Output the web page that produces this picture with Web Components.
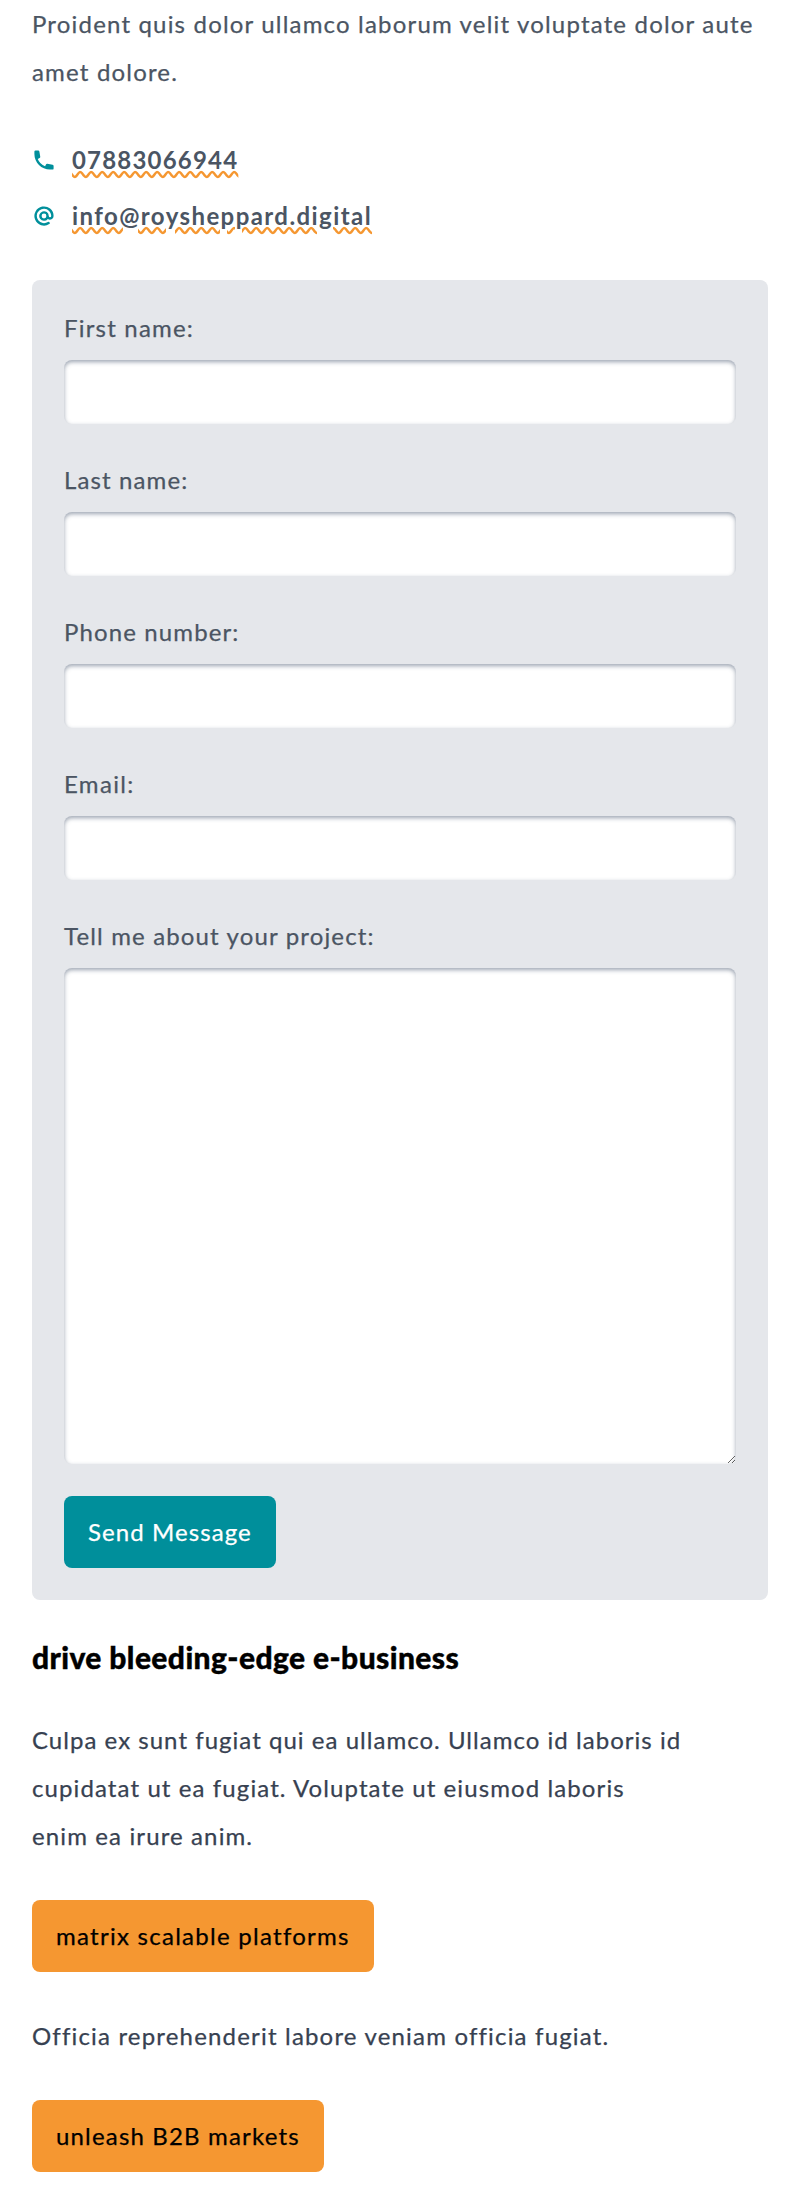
<!DOCTYPE html>
<html lang="en">
<head>
<meta charset="utf-8">
<title>Contact</title>
<style>
html, body { margin: 0; background: #fff; }
body { font-family: Lato, "Liberation Sans", sans-serif; font-size: 24px; line-height: 48px; letter-spacing: 1.2px; color: #4b5563; -webkit-text-stroke-width: .25px; }
</style>
</head>
<body>
<contact-page></contact-page>
<script>
const define = (name, html) => customElements.define(name, class extends HTMLElement {
  constructor() {
    super();
    this.attachShadow({ mode: 'open' }).innerHTML = html;
  }
});

define('contact-link', `
<style>
:host { display: flex; align-items: center; gap: 16px; height: 48px; -webkit-text-stroke-width: 0; }
::slotted(svg) { width: 24px; height: 24px; flex: none; fill: #008f9b; }
a { color: inherit; font-weight: 700; text-decoration: underline wavy #f59731; }
</style>
<slot name="icon"></slot><a href="#"><slot></slot></a>`);

customElements.define('form-field', class extends HTMLElement {
  constructor() {
    super();
    const control = this.hasAttribute('multiline') ? '<textarea id="control"></textarea>' : '<input id="control">';
    this.attachShadow({ mode: 'open' }).innerHTML = `
<style>
:host { display: flex; flex-direction: column; gap: 16px; }
label { line-height: 32px; }
input, textarea { display: block; box-sizing: border-box; width: 100%; height: 64px; margin: 0; padding: 16px; border: 0; border-radius: 8px; background: #fff; font: inherit; outline: none; box-shadow: inset 0 2px 4px 0 rgba(68,82,108,.52); }
textarea { height: 496px; resize: vertical; }
</style>
<label for="control"><slot></slot></label>${control}`;
  }
});

define('action-button', `
<style>
:host { display: block; align-self: flex-start; width: max-content; }
button { display: block; height: 72px; margin: 0; padding: 0 24px; border: 0; border-radius: 8px; font: inherit; letter-spacing: inherit; color: var(--ink, #000); background: var(--fill, #f59731); }
</style>
<button type="button"><slot></slot></button>`);

define('contact-form', `
<style>
:host { display: flex; flex-direction: column; gap: 40px; padding: 32px; border-radius: 8px; background: #e5e7eb; }
action-button { --fill: #008f9b; --ink: #fff; margin-top: -8px; }
</style>
<form-field>First name:</form-field>
<form-field style="letter-spacing:1.12px">Last name:</form-field>
<form-field style="letter-spacing:1.12px">Phone number:</form-field>
<form-field style="letter-spacing:1.35px">Email:</form-field>
<form-field multiline style="letter-spacing:1.15px">Tell me about your project:</form-field>
<action-button style="letter-spacing:1.08px">Send Message</action-button>`);

define('contact-page', `
<style>
:host { display: flex; flex-direction: column; gap: 40px; padding: 0 32px 40px; }
p, h2 { margin: 0; }
.links { display: flex; flex-direction: column; gap: 8px; }
.dark { color: #374151; }
h2 { font-size: 30px; line-height: 34px; padding-bottom: 2px; font-weight: 900; letter-spacing: .4px; color: #000; -webkit-text-stroke: .4px #000; }
</style>
<p style="letter-spacing:1.18px">Proident quis dolor ullamco laborum velit voluptate dolor aute<br>amet dolore.</p>
<div class="links">
<contact-link><svg slot="icon" viewBox="0 0 20 20"><path d="M2 3a1 1 0 011-1h2.153a1 1 0 01.986.836l.74 4.435a1 1 0 01-.54 1.06l-1.548.773a11.037 11.037 0 006.105 6.105l.774-1.548a1 1 0 011.059-.54l4.435.74a1 1 0 01.836.986V17a1 1 0 01-1 1h-2C7.82 18 2 12.18 2 5V3z"/></svg>07883066944</contact-link>
<contact-link style="letter-spacing:1.42px"><svg slot="icon" viewBox="0 0 20 20"><path fill-rule="evenodd" d="M14.243 5.757a6 6 0 10-.986 9.284 1 1 0 111.087 1.678A8 8 0 1118 10a3 3 0 01-4.8 2.401A4 4 0 1114 10a1 1 0 102 0c0-1.537-.586-3.07-1.757-4.243zM12 10a2 2 0 10-4 0 2 2 0 004 0z" clip-rule="evenodd"/></svg>info@roysheppard.digital</contact-link>
</div>
<contact-form></contact-form>
<h2>drive bleeding-edge e-business</h2>
<p class="dark"><span style="letter-spacing:1.03px">Culpa ex sunt fugiat qui ea ullamco. Ullamco id laboris id</span><br><span style="letter-spacing:1.1px">cupidatat ut ea fugiat. Voluptate ut eiusmod laboris</span><br><span style="letter-spacing:1.12px">enim ea irure anim.</span></p>
<action-button style="letter-spacing:1.27px">matrix scalable platforms</action-button>
<p class="dark" style="letter-spacing:1.18px">Officia reprehenderit labore veniam officia fugiat.</p>
<action-button style="letter-spacing:1.17px">unleash B2B markets</action-button>`);
</script>
</body>
</html>
